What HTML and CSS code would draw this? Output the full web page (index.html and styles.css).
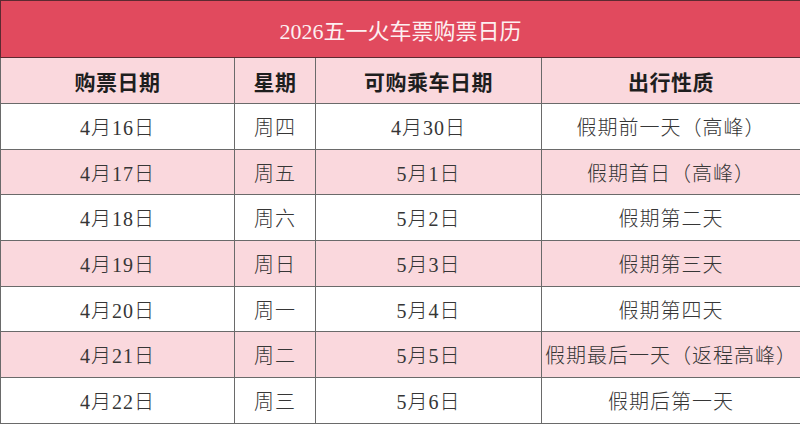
FILE: index.html
```html
<!DOCTYPE html>
<html lang="zh-CN">
<head>
<meta charset="utf-8">
<title>2026五一火车票购票日历</title>
<link rel="stylesheet" href="styles.css">
</head>
<body>
<table class="cal">
  <colgroup>
    <col class="c1"><col class="c2"><col class="c3"><col class="c4">
  </colgroup>
  <thead>
    <tr class="title-row"><th colspan="4">2026五一火车票购票日历</th></tr>
    <tr class="head-row"><th>购票日期</th><th>星期</th><th>可购乘车日期</th><th>出行性质</th></tr>
  </thead>
  <tbody>
    <tr><td>4月16日</td><td>周四</td><td>4月30日</td><td>假期前一天（高峰）</td></tr>
    <tr class="pink"><td>4月17日</td><td>周五</td><td>5月1日</td><td>假期首日（高峰）</td></tr>
    <tr><td>4月18日</td><td>周六</td><td>5月2日</td><td>假期第二天</td></tr>
    <tr class="pink"><td>4月19日</td><td>周日</td><td>5月3日</td><td>假期第三天</td></tr>
    <tr><td>4月20日</td><td>周一</td><td>5月4日</td><td>假期第四天</td></tr>
    <tr class="pink"><td>4月21日</td><td>周二</td><td>5月5日</td><td>假期最后一天（返程高峰）</td></tr>
    <tr><td>4月22日</td><td>周三</td><td>5月6日</td><td>假期后第一天</td></tr>
  </tbody>
</table>
</body>
</html>
```

FILE: styles.css
```css
html, body {
  margin: 0;
  padding: 0;
  background: #ffffff;
}

.cal {
  width: 800px;
  border-collapse: collapse;
  table-layout: fixed;
  font-family: "Liberation Serif", "Noto Sans CJK SC", serif;
  border: 1px solid #4a3438;
}

.c1 { width: 234px; }
.c2 { width: 81px; }
.c3 { width: 226px; }
.c4 { width: 259px; }

.cal th,
.cal td {
  padding: 0;
  text-align: center;
  vertical-align: middle;
  border: 1px solid #6a6a6a;
}

.title-row th {
  height: 56px;
  background: #e14a5e;
  color: #fdf0f1;
  font-size: 22px;
  font-weight: 400;
  border: 1px solid #5c2a31;
  border-right-color: #3a2a2c;
}

.head-row th {
  height: 45px;
  background: #fad8dd;
  color: #1e1e1e;
  font-size: 21px;
  font-weight: 700;
  letter-spacing: 0.5px;
}

.cal td {
  height: 44.7px;
  color: #363636;
  font-size: 20px;
  font-weight: 300;
  letter-spacing: 1px;
}

.pink td {
  background: #fad8dd;
}
```
